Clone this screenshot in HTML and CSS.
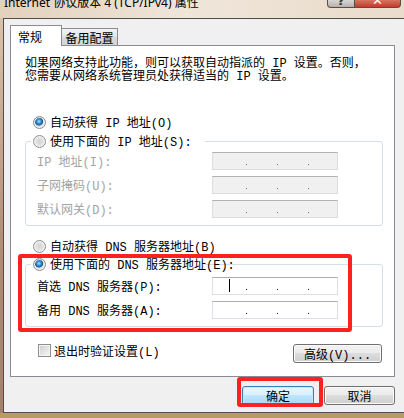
FILE: index.html
```html
<!DOCTYPE html>
<html lang="zh-CN">
<head>
    <meta charset="UTF-8">
    <title>Internet 协议版本 4 (TCP/IPv4) 属性</title>
    <link rel="stylesheet" href="styles.css">
</head>
<body>
    <div class="titlebar">
        <span class="title">Internet 协议版本 4 (TCP/IPv4) 属性</span>
        <div class="caption-buttons">
            <span class="cap-btn help">?</span>
            <span class="cap-btn close">✕</span>
        </div>
    </div>

    <div class="frame">
        <div class="client">
            <div class="tabs">
                <div class="tab active">常规</div>
                <div class="tab">备用配置</div>
            </div>

            <div class="panel">
                <p class="intro">如果网络支持此功能，则可以获取自动指派的 IP 设置。否则，<br>您需要从网络系统管理员处获得适当的 IP 设置。</p>

                <div class="radio-row auto-ip"><span class="radio checked"></span>自动获得 IP 地址(O)</div>
                <fieldset class="group ip-group">
                    <legend><div class="radio-row"><span class="radio"></span>使用下面的 IP 地址(S):</div></legend>
                    <div class="field disabled"><span>IP 地址(I):</span><span class="ip"><b></b><b></b><b></b></span></div>
                    <div class="field disabled"><span>子网掩码(U):</span><span class="ip"><b></b><b></b><b></b></span></div>
                    <div class="field disabled"><span>默认网关(D):</span><span class="ip"><b></b><b></b><b></b></span></div>
                </fieldset>

                <div class="radio-row auto-dns"><span class="radio"></span>自动获得 DNS 服务器地址(B)</div>
                <fieldset class="group dns-group">
                    <legend><div class="radio-row"><span class="radio checked"></span>使用下面的 DNS 服务器地址(E):</div></legend>
                    <div class="field"><span>首选 DNS 服务器(P):</span><span class="ip"><i class="caret"></i><b></b><b></b><b></b></span></div>
                    <div class="field"><span>备用 DNS 服务器(A):</span><span class="ip"><b></b><b></b><b></b></span></div>
                </fieldset>

                <div class="options">
                    <div class="check-row"><span class="check"></span>退出时验证设置(L)</div>
                    <div class="btn advanced">高级(V)...</div>
                </div>
            </div>

            <div class="actions">
                <div class="btn default">确定</div>
                <div class="btn">取消</div>
            </div>
        </div>
    </div>

    <div class="mark mark-dns"></div>
    <div class="mark mark-ok"></div>
</body>
</html>
```

FILE: styles.css
```css
* {
    box-sizing: border-box;
}

html, body {
    margin: 0;
}

body {
    position: relative;
    width: 404px;
    height: 418px;
    overflow: hidden;
    background: linear-gradient(to bottom, #e6d8c8 0%, #d4bba0 55%, #b89a64 100%);
    font-family: "Liberation Mono", "Noto Sans CJK SC", monospace;
    font-size: 12px;
    color: #000;
}

/* title bar */
.titlebar {
    height: 18px;
    display: flex;
    justify-content: space-between;
    align-items: flex-start;
    background: linear-gradient(to right, #e2d1bd 0%, #efe5d9 45%, #eadccc 100%);
}

.title {
    font-family: "Noto Sans", "Noto Sans CJK SC", sans-serif;
    font-size: 12px;
    line-height: 16px;
    margin-top: -5px;
    padding-left: 4px;
}

.caption-buttons {
    display: flex;
    margin-right: 3px;
}

.cap-btn {
    height: 8px;
    overflow: hidden;
    display: flex;
    justify-content: center;
    align-items: flex-end;
    font: bold 13px/13px "DejaVu Sans", sans-serif;
    border: 1px solid #5e4c42;
    border-top: none;
}

.help {
    width: 28px;
    color: #3a3a3a;
    background: linear-gradient(#d8d6d4, #b4b0ad);
    border-radius: 0 0 0 4px;
}

.close {
    width: 46px;
    color: #fff;
    background: linear-gradient(#d9735f, #c13c2a);
    border-left: none;
    border-radius: 0 0 4px 0;
}

/* window body */
.frame {
    display: flex;
    padding-left: 3px;
    background: linear-gradient(to bottom, #d9c3ab, #b48a74 60%, #a77f6c);
}

.client {
    flex: 1;
    height: 395px;
    background: #f0f0f0;
    border: 1px solid #4e4e4e;
    border-right: none;
    padding: 6px 0 0 6px;
}

.tabs {
    position: relative;
    z-index: 1;
    display: flex;
    align-items: flex-end;
    height: 21px;
    margin-bottom: -1px;
}

.tab {
    width: 57px;
    height: 18px;
    margin-left: -1px;
    display: flex;
    align-items: center;
    justify-content: center;
    font-family: "Noto Sans CJK SC", sans-serif;
    border: 1px solid #898c95;
    background: linear-gradient(#f3f3f3, #e4e4e4 50%, #dadada 50%, #d5d5d5);
}

.tab.active {
    width: 52px;
    height: 21px;
    margin-left: 0;
    justify-content: flex-start;
    padding-left: 7px;
    background: #fff;
    border-bottom: none;
}

.tab.active + .tab {
    margin-left: -1px;
    position: relative;
    z-index: -1;
}

.panel {
    width: 385px;
    height: 332px;
    background: #fff;
    border: 1px solid #898c95;
    padding: 12px 0 0 14px;
}

.intro {
    margin: 0;
    line-height: 13px;
}

.radio-row {
    display: flex;
    align-items: center;
    gap: 4px;
    height: 16px;
    padding-left: 8px;
    white-space: nowrap;
}

.radio {
    flex: none;
    width: 13px;
    height: 13px;
    border-radius: 50%;
    border: 1px solid #8e8f8f;
    background: radial-gradient(circle at 50% 50%, #d2d2d2 0%, #e4e4e4 50%, #fbfbfb 100%);
    box-shadow: inset 0 0 0 1px #f2f2f2;
}

.radio.checked {
    background: radial-gradient(circle at 45% 40%, #b4e2fb 0%, #3c98dc 22%, #0f5a98 42%, #dcdcdc 50%, #f4f4f4 100%);
}

.auto-ip {
    margin-top: 30px;
}

.auto-dns {
    margin-top: 12px;
}

.group {
    width: 358px;
    min-width: 0;
    margin: 2px 0 0;
    padding: 3px 44px 7px 5px;
    border: 1px solid #d5dfe5;
    border-radius: 3px;
}

.ip-group {
    margin-top: 3px;
}

.dns-group {
    padding-top: 5px;
}

.group legend {
    width: 174px;
    padding: 0;
}

.group legend .radio-row {
    padding-left: 2px;
}

.field {
    display: flex;
    justify-content: space-between;
    align-items: center;
    height: 18px;
    margin-left: 6px;
    white-space: nowrap;
}

.field + .field {
    margin-top: 6px;
}

.field.disabled {
    color: #a3a3a3;
}

.ip {
    position: relative;
    display: flex;
    align-items: flex-start;
    gap: 30px;
    width: 126px;
    height: 18px;
    padding: 11px 0 0 33px;
    background: #fff;
    border: 1px solid #dbdfe6;
    border-top-color: #abadb3;
}

.ip b {
    width: 1px;
    height: 1px;
    background: #1e1e1e;
}

.disabled .ip {
    background: #f0f0f0;
    border-color: #dadde1;
    border-top-color: #adb2b5;
}

.disabled .ip b {
    background: #707070;
}

.caret {
    position: absolute;
    left: 16px;
    top: 1px;
    width: 1px;
    height: 13px;
    background: #000;
}

.options {
    display: flex;
    justify-content: space-between;
    align-items: flex-start;
    width: 357px;
    margin-top: 17px;
}

.check-row {
    display: flex;
    align-items: center;
    gap: 3px;
    height: 13px;
    margin-left: 13px;
}

.check {
    width: 13px;
    height: 13px;
    border: 1px solid #8e8f8f;
    background: linear-gradient(135deg, #cfcfcf, #f7f7f7);
    box-shadow: inset 0 0 0 1px #f4f4f4;
}

.btn {
    display: flex;
    align-items: center;
    justify-content: center;
    height: 19px;
    border: 1px solid #707070;
    border-radius: 3px;
    background: linear-gradient(#f2f2f2, #ebebeb 50%, #dddddd 50%, #cfcfcf);
    box-shadow: inset 0 0 0 1px #fbfbfb;
}

.advanced {
    width: 89px;
}

.actions {
    display: flex;
    justify-content: flex-end;
    gap: 10px;
    width: 385px;
    margin-top: 9px;
}

.actions .btn {
    width: 71px;
}

.actions .btn.default {
    width: 72px;
    border-color: #3c7fb1;
    background: linear-gradient(#eaf6fd, #d9f0fc 50%, #bee6fd 50%, #a7d9f5);
    box-shadow: inset 0 0 0 1px #c5eafd;
}

/* red annotation boxes */
.mark {
    position: absolute;
    border: 4px solid #ff2020;
    border-radius: 3px;
}

.mark-dns {
    left: 18px;
    top: 254px;
    width: 334px;
    height: 78px;
}

.mark-ok {
    left: 237px;
    top: 377px;
    width: 86px;
    height: 30px;
}
```
